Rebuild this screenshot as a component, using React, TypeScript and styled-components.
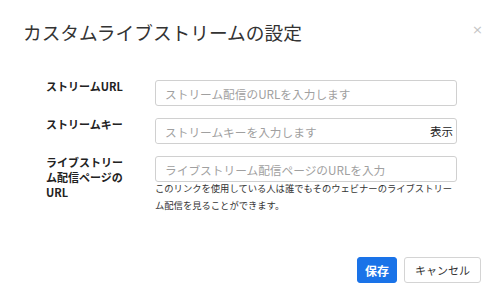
import React from "react";
import styled, { createGlobalStyle } from "styled-components";

const Global = createGlobalStyle`
  html, body { margin: 0; padding: 0; background: #fff; }
  body { font-family: "Noto Sans CJK JP", "Noto Sans", sans-serif; color: #333; }
  * { box-sizing: border-box; }
`;

const Dialog = styled.div`
  width: 500px;
  height: 298px;
  display: flex;
  flex-direction: column;
  background: #fff;
  padding: 20px 19px 15px 23px;
`;

const Header = styled.div`
  display: flex;
  justify-content: space-between;
  align-items: flex-start;
`;

const Title = styled.h1`
  margin: 0;
  font-size: 18.7px;
  line-height: 24px;
  font-weight: 400;
  color: #333;
`;

const Close = styled.button`
  border: none;
  background: none;
  padding: 0;
  margin: 2px -2px 0 0;
  font-family: "DejaVu Sans", sans-serif;
  font-size: 13px;
  line-height: 16px;
  color: #c4c4c4;
  cursor: pointer;
`;

const Form = styled.div`
  margin-top: 36px;
  padding-left: 23px;
  display: flex;
  flex-direction: column;
  gap: 12px;
`;

const Row = styled.div`
  display: grid;
  grid-template-columns: 80px 302px;
  column-gap: 29px;
  align-items: start;
`;

const Label = styled.label`
  margin-top: -1px;
  font-size: 11px;
  line-height: 15px;
  font-weight: 700;
  color: #222;
  line-break: strict;
`;

const Field = styled.div`
  display: flex;
  flex-direction: column;
`;

const Input = styled.input`
  width: 100%;
  height: 26px;
  border: 1px solid #d0d0d0;
  border-radius: 3px;
  padding: 0 9px;
  font-family: inherit;
  font-size: 11.7px;
  color: #333;
  outline: none;
  &::placeholder { color: #a0a0a0; }
`;

const InputGroup = styled.div`
  display: flex;
  align-items: center;
  height: 26px;
  border: 1px solid #d0d0d0;
  border-radius: 3px;
  padding-right: 3px;
`;

const BareInput = styled(Input)`
  flex: 1;
  height: 24px;
  border: none;
`;

const Toggle = styled.button`
  border: none;
  background: none;
  padding: 0;
  font-family: inherit;
  font-size: 11.5px;
  color: #222;
  cursor: pointer;
`;

const Help = styled.p`
  margin: -2px 0 0;
  font-size: 9.3px;
  line-height: 16.5px;
  color: #333;
`;

const Footer = styled.div`
  margin-top: auto;
  display: flex;
  justify-content: flex-end;
  gap: 7px;
`;

const Button = styled.button<{ $primary?: boolean }>`
  height: 26px;
  padding: 0 ${(p) => (p.$primary ? "7px" : "10px")};
  border-radius: 3px;
  font-family: inherit;
  font-size: ${(p) => (p.$primary ? "12px" : "11px")};
  font-weight: ${(p) => (p.$primary ? 700 : 400)};
  border: 1px solid ${(p) => (p.$primary ? "#1a73e8" : "#d4d4d4")};
  background: ${(p) => (p.$primary ? "#1a73e8" : "#fff")};
  color: ${(p) => (p.$primary ? "#fff" : "#333")};
  cursor: pointer;
`;

export default function App() {
  return (
    <>
      <Global />
      <Dialog>
        <Header>
          <Title>カスタムライブストリームの設定</Title>
          <Close aria-label="close">×</Close>
        </Header>
        <Form>
          <Row>
            <Label>ストリームURL</Label>
            <Field>
              <Input placeholder="ストリーム配信のURLを入力します" />
            </Field>
          </Row>
          <Row>
            <Label>ストリームキー</Label>
            <Field>
              <InputGroup>
                <BareInput placeholder="ストリームキーを入力します" />
                <Toggle>表示</Toggle>
              </InputGroup>
            </Field>
          </Row>
          <Row>
            <Label>ライブストリーム配信ページのURL</Label>
            <Field>
              <Input placeholder="ライブストリーム配信ページのURLを入力" />
              <Help>
                このリンクを使用している人は誰でもそのウェビナーのライブストリーム配信を見ることができます。
              </Help>
            </Field>
          </Row>
        </Form>
        <Footer>
          <Button $primary>保存</Button>
          <Button>キャンセル</Button>
        </Footer>
      </Dialog>
    </>
  );
}
